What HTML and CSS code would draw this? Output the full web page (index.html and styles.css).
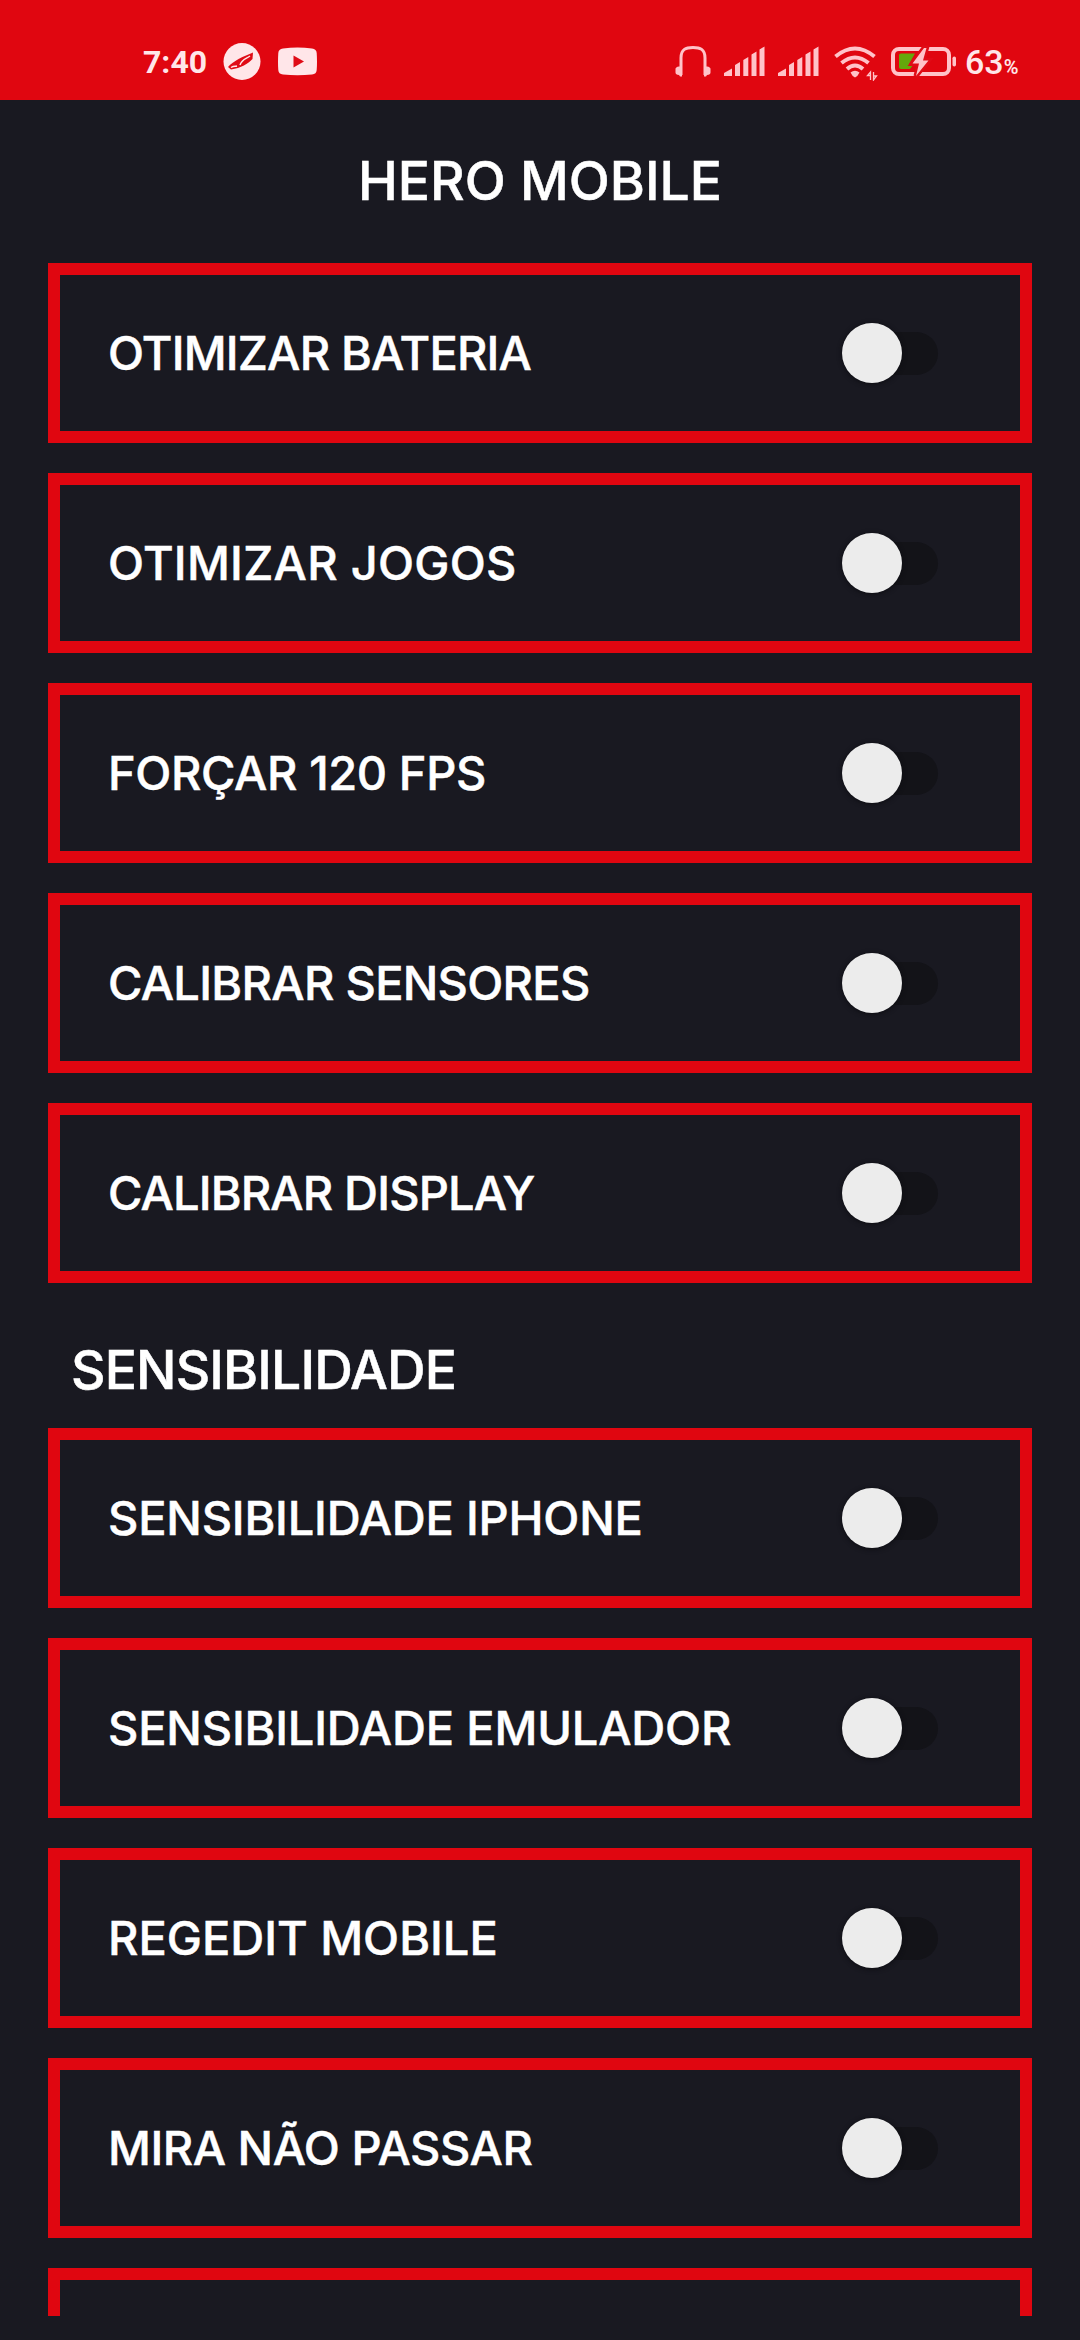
FILE: index.html
```html
<!DOCTYPE html>
<html lang="pt-BR">
<head>
<meta charset="utf-8">
<title>Hero Mobile</title>
<link rel="stylesheet" href="styles.css">
</head>
<body>
<header class="status">
  <span class="time">7:40</span>
  <svg class="app" width="38" height="38" viewBox="0 0 38 38"><circle cx="19" cy="18.500" r="18.500" fill="#ffe6e9"/><path d="M5 24C10 18 21 13 30 9.500L29.500 16C25 21 18 25 8 26.500Z" fill="#e00b16"/><path d="M8 24.500C11 22.500 12 23.500 14 23M17 22C19 16 23 16 27 13" fill="none" stroke="#ffe6e9" stroke-width="1.500"/></svg>
  <svg class="video" width="39" height="38" viewBox="0 0 39 38"><path d="M5 5.500Q19.500 3.500 34 5.500Q38.500 6 38.700 10Q39.300 19 38.700 27Q38.500 31 34 31.500Q19.500 33 5 31.500Q.5 31 .3 27Q-.3 19 .3 10Q.5 6 5 5.500Z" fill="#ffe6e9"/><path d="M15.500 12.500V24.500L26 18.500Z" fill="#e00b16"/></svg>
  <svg class="phones" width="36" height="38" viewBox="0 0 36 38"><path d="M6 32V15C6 6 11 4.500 18 4.500S30 6 30 15V32" fill="none" stroke="#ffc3c9" stroke-width="3"/><path d="M7 23.500H4Q.5 24 .5 26V29.500Q.5 31.500 4 32L5 33.500H7ZM29 23.500H32Q35.500 24 35.500 26V29.500Q35.500 31.500 32 32L31 33.500H29Z" fill="#ffc3c9"/></svg>
  <svg class="signal" width="41" height="38" viewBox="0 0 41 38"><path d="M0 33V30L8 25.500V33ZM11 33V22L16 19V33ZM19.300 33V17L24.300 14V33ZM27.500 33V11.500L32.500 8.500V33ZM35.500 33V6.500L40.500 3.500V33Z" fill="#ffc3c9"/></svg>
  <svg class="signal2" width="41" height="38" viewBox="0 0 41 38"><path d="M0 33V30L8 25.500V33ZM11 33V22L16 19V33ZM19.300 33V17L24.300 14V33ZM27.500 33V11.500L32.500 8.500V33ZM35.500 33V6.500L40.500 3.500V33Z" fill="#ffc3c9"/></svg>
  <svg class="wifi" width="44" height="38" viewBox="0 0 44 38"><g fill="none" stroke="#ffc3c9" stroke-width="4"><path d="M1.500 13.500Q21 -2.500 40.500 13.500"/><path d="M7.500 20Q21 9 34.500 20"/><path d="M13 26Q21 19 29 26"/></g><path d="M16.500 29.500Q21 26 25.500 29.500Q24 33 21 34.500Q18 33 16.500 29.500Z" fill="#ffc3c9"/><path d="M36.500 37V29L33.500 32.500H36M39.500 29V37L42.500 33H40" fill="none" stroke="#ffc3c9" stroke-width="1.300"/></svg>
  <svg class="battery" width="66" height="38" viewBox="0 0 66 38"><rect x="2" y="6" width="56" height="25" rx="6" fill="none" stroke="#ffc3c9" stroke-width="4"/><rect x="61.500" y="13.500" width="3.500" height="10" rx="1.700" fill="#ffc3c9"/><path d="M8 12Q8 10.500 10 10.500H24L18 21H23L19 26H10Q8 26 8 24Z" fill="#65a80b"/><path d="M33 5L21.500 20.500H28L25 33L37.500 17.500H32L35.500 5Z" fill="#ffc3c9" stroke="#e00b16" stroke-width="5" paint-order="stroke"/></svg>
  <span class="level">63<small>%</small></span>
</header>
<main class="page">
  <h1 class="title">HERO MOBILE</h1>
  <section class="cards">
    <div class="card"><span class="label l-bat">OTIMIZAR BATERIA</span><i class="switch"></i></div>
    <div class="card"><span class="label l-jog">OTIMIZAR JOGOS</span><i class="switch"></i></div>
    <div class="card"><span class="label l-fps">FORÇAR 120 FPS</span><i class="switch"></i></div>
    <div class="card"><span class="label l-sen">CALIBRAR SENSORES</span><i class="switch"></i></div>
    <div class="card"><span class="label l-dis">CALIBRAR DISPLAY</span><i class="switch"></i></div>
  </section>
  <h2 class="subtitle">SENSIBILIDADE</h2>
  <section class="cards">
    <div class="card"><span class="label l-iph">SENSIBILIDADE IPHONE</span><i class="switch"></i></div>
    <div class="card"><span class="label l-emu">SENSIBILIDADE EMULADOR</span><i class="switch"></i></div>
    <div class="card"><span class="label l-reg">REGEDIT MOBILE</span><i class="switch"></i></div>
    <div class="card"><span class="label l-mir">MIRA NÃO PASSAR</span><i class="switch"></i></div>
    <div class="card"></div>
  </section>
</main>
</body>
</html>
```
FILE: styles.css
```css
* { box-sizing: border-box; }
body { margin: 0; width: 1080px; height: 2340px; overflow: hidden; background: #191921; color: #fff; font-family: Inter, "Open Sans", sans-serif; }
.status { height: 100px; background: #e00610; display: flex; align-items: flex-start; padding: 43px 0 0 143px; font-family: Roboto, sans-serif; line-height: 39px; }
.status svg { flex: none; }
.time { width: 80px; font-size: 32px; font-weight: 700; color: #ffe6e9; }
.video { margin-left: 17px; }
.phones { margin-left: 358px; }
.signal { margin-left: 13px; }
.signal2 { margin-left: 13px; }
.wifi { margin-left: 15px; }
.battery { margin-left: 13px; }
.level { margin-left: 8px; font-size: 34px; font-weight: 500; color: #ffe6e9; white-space: nowrap; }
.level small { font-size: 20px; font-weight: 600; }
.page { height: 2216px; overflow: hidden; padding: 0 48px; }
.title, .subtitle { margin: 0; font-size: 53.500px; font-weight: 500; white-space: nowrap; -webkit-text-stroke: .5px #fff; }
.title { height: 163px; line-height: 162px; text-align: center; }
.subtitle { height: 145px; line-height: 174px; padding-left: 23px; letter-spacing: -.87px; }
.cards { display: flex; flex-direction: column; gap: 30px; }
.card { flex: none; height: 180px; border: 12px solid #e00610; display: flex; align-items: center; justify-content: space-between; padding: 0 82px 0 48px; }
.label { font-size: 47px; font-weight: 500; line-height: 60px; white-space: nowrap; -webkit-text-stroke: .5px #fff; }
.l-bat { letter-spacing: -.8px; }
.l-jog { letter-spacing: .28px; }
.l-fps { letter-spacing: -.4px; }
.l-sen { letter-spacing: -.7px; }
.l-dis { letter-spacing: -.85px; }
.l-iph { letter-spacing: -.2px; }
.l-emu { letter-spacing: -.18px; }
.l-mir { letter-spacing: -.48px; }
.switch { width: 96px; height: 60px; display: flex; align-items: center; }
.switch::before { content: ""; flex: none; position: relative; z-index: 1; width: 60px; height: 60px; border-radius: 50%; background: #ececec; box-shadow: 0 1px 5px #0d0d12; }
.switch::after { content: ""; flex: none; width: 66px; height: 43px; margin-left: -30px; border-radius: 22px; background: #131318; }
```
